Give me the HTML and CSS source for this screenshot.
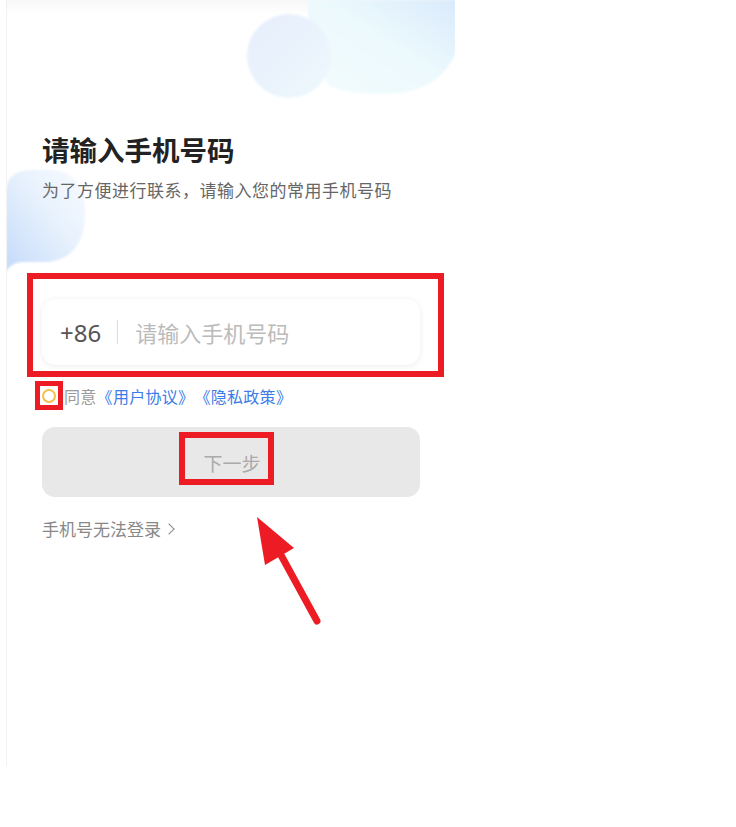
FILE: index.html
```html
<!DOCTYPE html>
<html lang="zh-CN">
<head>
    <meta charset="UTF-8">
    <meta name="viewport" content="width=device-width, initial-scale=1.0">
    <title>请输入手机号码</title>
    <link rel="stylesheet" href="styles.css">
</head>
<body>

    <div class="screen">
        <div class="status-bar"></div>

        <!-- background clouds -->
        <svg class="cloud cloud-top" width="210" height="100" viewBox="245 0 210 100">
            <defs>
                <linearGradient id="gTop" x1="0" y1="1" x2="1" y2="0">
                    <stop offset="0" stop-color="#f3fcfe"/>
                    <stop offset="0.55" stop-color="#ecf9fd"/>
                    <stop offset="1" stop-color="#d9eafc"/>
                </linearGradient>
                <linearGradient id="gCircle" x1="0" y1="0" x2="1" y2="1">
                    <stop offset="0" stop-color="#e6eefc"/>
                    <stop offset="1" stop-color="#eef8fd"/>
                </linearGradient>
            </defs>
            <path d="M307 0 L455 0 L455 52 Q440 88 398 93 Q355 97 328 86 L307 40 Z" fill="url(#gTop)"/>
            <circle cx="288" cy="56" r="42" fill="url(#gCircle)"/>
        </svg>

        <svg class="cloud cloud-left" width="80" height="104" viewBox="6 168 80 104">
            <defs>
                <linearGradient id="gLeft" x1="0" y1="1" x2="1" y2="0">
                    <stop offset="0" stop-color="#c4dafa"/>
                    <stop offset="0.55" stop-color="#e7f1fd"/>
                    <stop offset="1" stop-color="#f8fbff"/>
                </linearGradient>
            </defs>
            <path d="M6 190 Q8 170 32 170 L52 170 Q85 172 85 212 Q85 258 48 262 L22 262 Q10 263 6 272 Z" fill="url(#gLeft)"/>
        </svg>

        <div class="content">
            <h1 class="title">请输入手机号码</h1>
            <p class="subtitle">为了方便进行联系，请输入您的常用手机号码</p>

            <div class="phone-input">
                <span class="area-code">+86</span>
                <span class="divider"></span>
                <span class="placeholder">请输入手机号码</span>
            </div>

            <div class="agree">
                <span class="check"></span>
                <span class="agree-text">同意</span>
                <a class="link">《用户协议》</a><a class="link">《隐私政策》</a>
            </div>

            <button class="next-btn">下一步</button>

            <div class="help">手机号无法登录 <span class="chevron"></span></div>
        </div>
    </div>

    <!-- annotations -->
    <div class="mark mark-input"></div>
    <div class="mark mark-check"></div>
    <div class="mark mark-btn"></div>
    <svg class="arrow" width="736" height="827" viewBox="0 0 736 827">
        <line x1="317" y1="621" x2="276" y2="546" stroke="#ed1c24" stroke-width="7" stroke-linecap="round"/>
        <polygon points="257,517 265,565 294,548" fill="#ed1c24"/>
    </svg>

</body>
</html>
```

FILE: styles.css
```css
* {
    margin: 0;
    padding: 0;
    box-sizing: border-box;
}

body {
    font-family: "Noto Sans CJK SC", "Noto Sans", sans-serif;
    background: #fff;
    width: 736px;
    height: 827px;
    position: relative;
    overflow: hidden;
}

.screen {
    position: relative;
    margin-left: 6px;
    width: 449px;
    height: 766px;
    border-left: 1px solid #f1f1f1;
    background: #fff;
    overflow: hidden;
}

.status-bar {
    height: 14px;
    background: linear-gradient(#f7f7f7, #fff);
}

.cloud {
    position: absolute;
    filter: blur(0.8px);
}

.cloud-top {
    top: 0;
    left: 239px;
}

.cloud-left {
    top: 168px;
    left: -1px;
}

.content {
    position: relative;
    padding: 117px 0 0 35px;
}

.title {
    font-size: 27.5px;
    line-height: 36px;
    font-weight: bold;
    color: #222;
}

.subtitle {
    margin-top: 11px;
    font-size: 17px;
    line-height: 24px;
    color: #666;
    letter-spacing: 0.5px;
}

.phone-input {
    margin-top: 97px;
    width: 378px;
    height: 66px;
    background: #fff;
    border-radius: 14px;
    box-shadow: 0 1px 6px rgba(0, 0, 0, 0.08);
    display: flex;
    align-items: center;
    padding-left: 18px;
}

.area-code {
    font-size: 24px;
    color: #555;
    font-family: "Noto Sans", sans-serif;
}

.divider {
    width: 1px;
    height: 24px;
    background: #ddd;
    margin: 0 17px 0 16px;
}

.placeholder {
    font-size: 22px;
    color: #bbb;
}

.agree {
    margin-top: 20px;
    height: 22px;
    display: flex;
    align-items: center;
    font-size: 16px;
    letter-spacing: 0.3px;
}

.check {
    width: 14px;
    height: 14px;
    border: 2px solid #f4bf4a;
    border-radius: 50%;
    background: #fff;
    margin: 0 8px 0 0;
}

.agree-text {
    color: #999;
}

.link {
    color: #3b7ce8;
}

.next-btn {
    display: block;
    margin-top: 20px;
    width: 378px;
    height: 70px;
    border: none;
    border-radius: 13px;
    background: #e8e8e8;
    color: #aaa;
    font-family: inherit;
    font-size: 19px;
    padding-left: 2px;
}

.help {
    margin-top: 20px;
    font-size: 17px;
    line-height: 24px;
    color: #888;
    display: flex;
    align-items: center;
}

.chevron {
    width: 8px;
    height: 8px;
    border-top: 1.5px solid #888;
    border-right: 1.5px solid #888;
    transform: rotate(45deg);
    margin-left: 4px;
}

.mark {
    position: absolute;
    border: 6px solid #ed1c24;
}

.mark-input {
    left: 27px;
    top: 273px;
    width: 417px;
    height: 104px;
}

.mark-check {
    left: 35px;
    top: 381px;
    width: 28px;
    height: 29px;
    border-width: 5px;
}

.mark-btn {
    left: 179px;
    top: 432px;
    width: 95px;
    height: 53px;
}

.arrow {
    position: absolute;
    left: 0;
    top: 0;
    pointer-events: none;
}
```
